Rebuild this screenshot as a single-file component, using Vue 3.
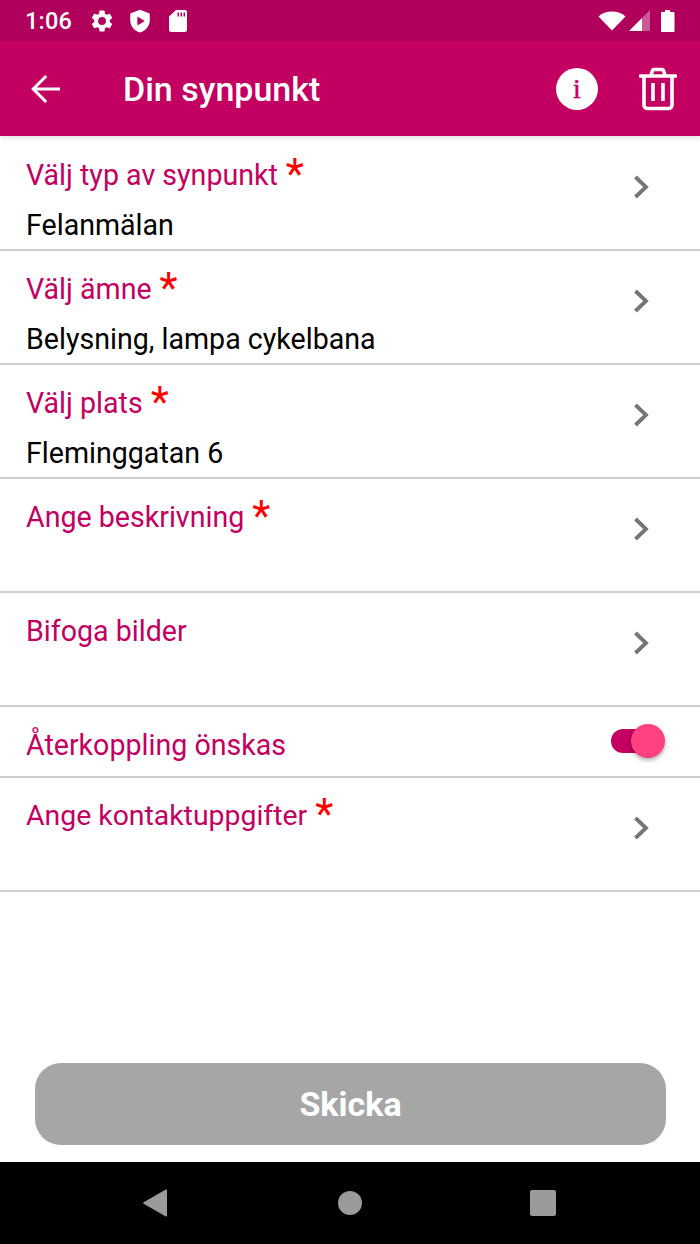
<script setup>
const rows = [
  { label: 'Välj typ av synpunkt', required: true, value: 'Felanmälan' },
  { label: 'Välj ämne', required: true, value: 'Belysning, lampa cykelbana' },
  { label: 'Välj plats', required: true, value: 'Fleminggatan 6' },
  { label: 'Ange beskrivning', required: true, value: '' },
  { label: 'Bifoga bilder', required: false, value: '' }
]
</script>

<template>
  <div class="screen">
    <div class="status">
      <span class="time">1:06</span>
      <svg class="st-icon gear" width="26" height="26" viewBox="0 0 24 24">
        <path fill="#fff" d="M19.14 12.94c.04-.3.06-.61.06-.94 0-.32-.02-.64-.07-.94l2.03-1.58a.49.49 0 0 0 .12-.61l-1.92-3.32a.49.49 0 0 0-.59-.22l-2.39.96c-.5-.38-1.03-.7-1.62-.94l-.36-2.54a.48.48 0 0 0-.48-.41h-3.84c-.24 0-.43.17-.47.41l-.36 2.54c-.59.24-1.13.57-1.62.94l-2.39-.96a.49.49 0 0 0-.59.22L2.74 8.87c-.12.21-.08.47.12.61l2.03 1.58c-.05.3-.09.63-.09.94s.02.64.07.94l-2.03 1.58a.49.49 0 0 0-.12.61l1.92 3.32c.12.22.37.29.59.22l2.39-.96c.5.38 1.03.7 1.62.94l.36 2.54c.05.24.24.41.48.41h3.84c.24 0 .44-.17.47-.41l.36-2.54c.59-.24 1.13-.56 1.62-.94l2.39.96c.22.08.47 0 .59-.22l1.92-3.32c.12-.22.07-.47-.12-.61l-2.01-1.58zM12 15.6A3.6 3.6 0 1 1 12 8.4a3.6 3.6 0 0 1 0 7.2z"/>
      </svg>
      <svg class="st-icon shield" width="26" height="26" viewBox="0 0 24 24">
        <path fill="#fff" fill-rule="evenodd" d="M12 1.500 3 5v6.500c0 5.200 3.800 9.700 9 11 5.200-1.300 9-5.800 9-11V5l-9-3.500zM9.600 7.800l6.800 4.200-6.800 4.200V7.800z"/>
      </svg>
      <svg class="st-icon sd" width="20" height="22" viewBox="0 0 20 22">
        <path fill="#fff" fill-rule="evenodd" d="M17 0H8L1 6.500V20c0 1.100.9 2 2 2h14c1.100 0 2-.9 2-2V2c0-1.100-.9-2-2-2zM9.500 2.500H11v4H9.500v-4zm3 0H14v4h-1.500v-4zm3 0H17v4h-1.500v-4z"/>
      </svg>
      <span class="spacer"></span>
      <svg width="28" height="20" viewBox="0 0 28 20" class="wifi">
        <path fill="#fff" d="M0.500 5.500C4 2.300 8.700 0.500 14 0.500s10 1.800 13.500 5L14 19.500 0.500 5.500z"/>
      </svg>
      <svg width="22" height="22" viewBox="0 0 22 22" class="signal">
        <path fill="#fff" fill-opacity=".35" d="M14 8l8-8v21h-8z"/>
        <path fill="#fff" d="M14 8v13H1z"/>
      </svg>
      <svg width="14" height="22" viewBox="0 0 14 22" class="battery">
        <path fill="#fff" d="M4 0h5v2h3.500c.6 0 1 .4 1 1v18c0 .6-.4 1-1 1H1c-.6 0-1-.4-1-1V3c0-.6.4-1 1-1h3z"/>
      </svg>
    </div>

    <header class="appbar">
      <svg class="back" width="42" height="42" viewBox="0 0 24 24">
        <path fill="#fff" d="M20 11.100H6.800l5.900-5.900L11.500 4l-8 8 8 8 1.200-1.200-5.900-5.900H20z"/>
      </svg>
      <h1 class="title">Din synpunkt</h1>
      <span class="info">i</span>
      <svg class="trash" width="38" height="44" viewBox="0 0 38 44">
        <path fill="none" stroke="#fff" stroke-width="3.600" stroke-linecap="round" stroke-linejoin="round" d="M1.500 9h35M5 9v29c0 2 1.500 3.500 3.500 3.500h21c2 0 3.500-1.500 3.500-3.500V9M12 8l1.500-4.500c.2-.7.700-1 1.400-1h8.200c.7 0 1.200.3 1.400 1L26 8"/>
        <path fill="none" stroke="#fff" stroke-width="3.600" d="M14 16v18M24 16v18"/>
      </svg>
    </header>

    <main class="content">
      <div v-for="row in rows" :key="row.label" class="row">
        <div class="row-text">
          <div class="label">
            {{ row.label }}<span v-if="row.required" class="star">*</span>
          </div>
          <div class="value">{{ row.value }}</div>
        </div>
        <svg class="chev" width="20" height="26" viewBox="0 0 20 26">
          <path fill="none" stroke="#757575" stroke-width="3.800" d="M3.500 3 14 13 3.500 23"/>
        </svg>
      </div>

      <div class="row toggle-row">
        <div class="label">Återkoppling önskas</div>
        <div class="switch"><span class="thumb"></span></div>
      </div>

      <div class="row">
        <div class="row-text">
          <div class="label contact">Ange kontaktuppgifter<span class="star">*</span></div>
          <div class="value"></div>
        </div>
        <svg class="chev" width="20" height="26" viewBox="0 0 20 26">
          <path fill="none" stroke="#757575" stroke-width="3.800" d="M3.500 3 14 13 3.500 23"/>
        </svg>
      </div>
    </main>

    <div class="footer">
      <button class="send">Skicka</button>
    </div>

    <nav class="navbar">
      <svg width="26" height="30" viewBox="0 0 26 30">
        <path fill="#9a9a9a" d="M24 1.500c.6 0 1 .4 1 1v25c0 .6-.4 1-1 1-.2 0-.4-.1-.6-.2L1.600 15.800c-.5-.4-.5-1.200 0-1.600L23.400 1.700c.2-.1.400-.2.600-.2z"/>
      </svg>
      <span class="home"></span>
      <span class="square"></span>
    </nav>
  </div>
</template>

<style>
html, body {
  margin: 0;
  padding: 0;
  background: #fff;
}
</style>

<style scoped>
.screen {
  width: 700px;
  height: 1244px;
  display: flex;
  flex-direction: column;
  font-family: Roboto, "Liberation Sans", sans-serif;
  background: #fff;
  overflow: hidden;
}

.status {
  height: 41px;
  background: #b0005c;
  display: flex;
  align-items: center;
  padding: 0 25px 0 25px;
  color: #fff;
  flex-shrink: 0;
}

.time {
  font-size: 23.5px;
  font-weight: 500;
  width: 53px;
  letter-spacing: 0.2px;
}

.gear {
  margin-left: 11px;
}

.shield {
  margin-left: 12px;
}

.sd {
  margin-left: 15px;
}

.spacer {
  flex: 1;
}

.signal {
  margin-left: 2px;
}

.battery {
  margin-left: 11px;
}

.appbar {
  height: 95px;
  background: #c30061;
  display: flex;
  align-items: center;
  padding: 0 23px 0 25px;
  flex-shrink: 0;
  box-shadow: 0 2px 5px rgba(0, 0, 0, 0.12);
  position: relative;
}

.title {
  margin: 0 0 0 56px;
  flex: 1;
  color: #fff;
  font-size: 34px;
  font-weight: 500;
}

.info {
  width: 42px;
  height: 42px;
  border-radius: 50%;
  background: #fff;
  color: #c30061;
  font-family: "Liberation Serif", serif;
  font-size: 28px;
  font-weight: 400;
  -webkit-text-stroke: 0.5px #c30061;
  display: flex;
  align-items: center;
  justify-content: center;
  margin-right: 41px;
}

.content {
  flex: 1;
}

.row {
  height: 113px;
  border-bottom: 2px solid #cfcfcf;
  box-sizing: content-box;
  display: flex;
  align-items: center;
  padding: 0 49px 0 26px;
  margin-bottom: -1px;
}

.row-text {
  flex: 1;
  align-self: flex-start;
  padding-top: 20px;
}

.label {
  color: #c30061;
  font-size: 28.6px;
  line-height: 38px;
  height: 38px;
  white-space: nowrap;
}

.contact {
  font-size: 28.4px;
}

.star {
  color: #ff0000;
  font-size: 42px;
  line-height: 0;
  margin-left: 8px;
  vertical-align: -3px;
}

.value {
  color: #000;
  font-size: 28.6px;
  line-height: 36px;
  margin-top: 13px;
}

.chev {
  margin-bottom: 12px;
  margin-right: -1px;
}

.toggle-row {
  height: 70px;
  justify-content: space-between;
  padding-right: 35px;
}

.toggle-row .label {
  margin-top: 8px;
}

.switch {
  width: 48px;
  height: 24px;
  border-radius: 12px;
  background: #c30061;
  position: relative;
  margin-right: 6px;
}

.thumb {
  position: absolute;
  right: -6px;
  top: -5px;
  width: 34px;
  height: 34px;
  border-radius: 50%;
  background: #ff4081;
  box-shadow: 0 2px 4px rgba(0, 0, 0, 0.35);
}

.footer {
  height: 117px;
  box-sizing: border-box;
  padding: 18px 34px 0 35px;
  flex-shrink: 0;
}

.send {
  display: block;
  width: 100%;
  height: 82px;
  border: none;
  border-radius: 26px;
  background: #a6a6a6;
  color: #fff;
  font-family: inherit;
  font-size: 34px;
  font-weight: 700;
}

.navbar {
  height: 82px;
  background: #000;
  display: flex;
  align-items: center;
  position: relative;
  flex-shrink: 0;
  padding-left: 142px;
  box-sizing: border-box;
}

.home {
  width: 24px;
  height: 24px;
  border-radius: 50%;
  background: #9a9a9a;
  margin-left: 170px;
}

.square {
  width: 26px;
  height: 26px;
  border-radius: 2px;
  background: #9a9a9a;
  margin-left: 168px;
}
</style>
